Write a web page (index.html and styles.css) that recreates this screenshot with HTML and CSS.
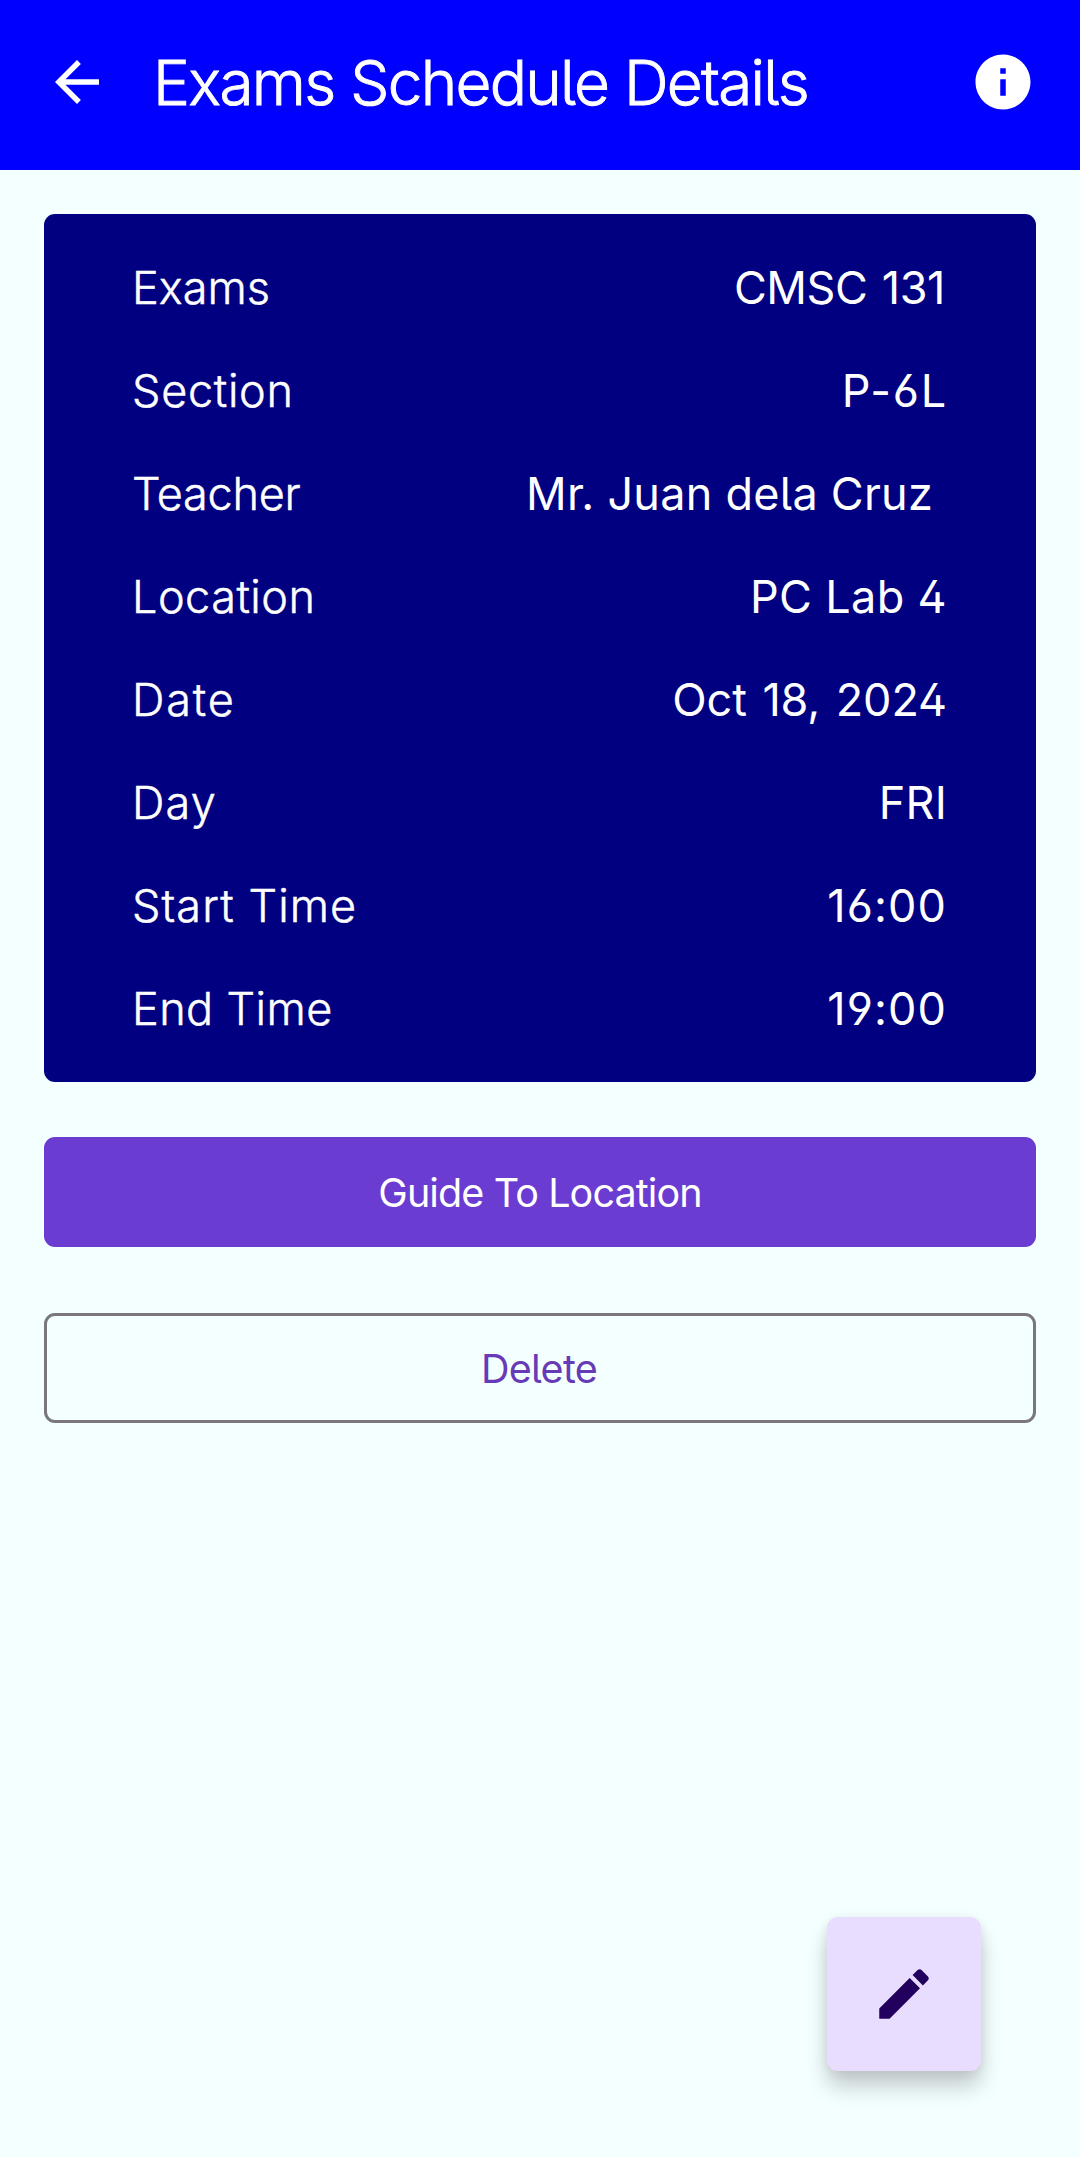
FILE: index.html
```html
<!DOCTYPE html>
<html lang="en">
<head>
<meta charset="utf-8">
<title>Exams Schedule Details</title>
<link rel="stylesheet" href="styles.css">
</head>
<body>
<header class="app-bar">
  <svg class="icon" viewBox="0 0 24 24" role="img" aria-label="Back"><path d="M20 11H7.83l5.59-5.59L12 4l-8 8 8 8 1.41-1.41L7.83 13H20v-2z"/></svg>
  <h1 class="title">Exams Schedule Details</h1>
  <svg class="icon" viewBox="0 0 24 24" role="img" aria-label="Information"><path d="M12 2C6.48 2 2 6.48 2 12s4.48 10 10 10 10-4.48 10-10S17.52 2 12 2zm1 15h-2v-6h2v6zm0-8h-2V7h2v2z"/></svg>
</header>
<main class="content">
  <dl class="card">
    <div class="row exam"><dt>Exams</dt><dd>CMSC 131</dd></div>
    <div class="row section"><dt>Section</dt><dd>P-6L</dd></div>
    <div class="row teacher"><dt>Teacher</dt><dd>Mr. Juan dela Cruz </dd></div>
    <div class="row location"><dt>Location</dt><dd>PC Lab 4</dd></div>
    <div class="row date"><dt>Date</dt><dd>Oct 18, 2024</dd></div>
    <div class="row day"><dt>Day</dt><dd>FRI</dd></div>
    <div class="row start"><dt>Start Time</dt><dd>16:00</dd></div>
    <div class="row end"><dt>End Time</dt><dd>19:00</dd></div>
  </dl>
  <button class="button filled" type="button">Guide To Location</button>
  <button class="button outlined" type="button">Delete</button>
</main>
<button class="fab" type="button" aria-label="Edit">
  <svg class="icon" viewBox="0 0 24 24"><path d="M3 17.25V21h3.75L17.81 9.94l-3.75-3.75L3 17.25zM20.71 7.04c.39-.39.39-1.02 0-1.41l-2.34-2.34c-.39-.39-1.02-.39-1.41 0l-1.83 1.83 3.75 3.75 1.83-1.83z"/></svg>
</button>
</body>
</html>
```
FILE: styles.css
```css
* {
  box-sizing: border-box;
}

body {
  margin: 0;
  min-height: 2157px;
  background: #f4ffff;
  color: #fff;
  font-family: Inter, "Noto Sans", sans-serif;
  font-feature-settings: "cv02", "cv03", "cv04", "cv05";
}

.icon {
  display: block;
  flex: none;
  width: 66px;
  height: 66px;
  fill: currentColor;
}

.app-bar {
  display: flex;
  align-items: center;
  height: 170px;
  padding: 0 44px 6px;
  background: #00f;
}

.title {
  flex: 1;
  margin: 0 0 0 43px;
  padding-top: 2px;
  font-size: 62px;
  font-weight: 300;
  line-height: 76px;
  letter-spacing: -1.7px;
  white-space: nowrap;
  -webkit-text-stroke: .9px currentColor;
}

.content {
  display: flex;
  flex-direction: column;
  padding: 44px;
}

.card {
  height: 868px;
  margin: 0 0 55px;
  padding: 22px 88px;
  border-radius: 11px;
  background: #000080;
}

.row {
  display: flex;
  justify-content: space-between;
  align-items: center;
  height: 103px;
  font-size: 45px;
  line-height: 60px;
  white-space: pre;
}

.row dt {
  font-weight: 300;
  -webkit-text-stroke: .5px currentColor;
}

.row dd {
  margin: 0;
  padding-right: 1px;
}

.exam dt { letter-spacing: 0; }
.exam dd { padding-right: 3px; letter-spacing: -.4px; word-spacing: 2px; }
.section dt { letter-spacing: .7px; }
.section dd { padding-right: 0; letter-spacing: 1.8px; }
.teacher dt { letter-spacing: -.25px; }
.teacher dd { padding-right: 2px; letter-spacing: .25px; }
.location dt { letter-spacing: .5px; }
.location dd { letter-spacing: .35px; }
.date dt { letter-spacing: 1.85px; }
.date dd { letter-spacing: -.1px; word-spacing: 3px; }
.day dt { letter-spacing: 1.2px; }
.day dd { padding-right: 1px; letter-spacing: .2px; }
.start dt { letter-spacing: 1.1px; }
.end dt { letter-spacing: .4px; }
.start dd,
.end dd { padding-right: 1px; letter-spacing: 1.1px; }

.button {
  height: 110px;
  padding: 2px 0 0;
  border: 0;
  border-radius: 11px;
  font: inherit;
  font-feature-settings: inherit;
  font-size: 39.5px;
  line-height: 55px;
}

.filled {
  margin-bottom: 66px;
  background: #6b3cd1;
  color: #fff;
  letter-spacing: -.9px;
}

.outlined {
  padding-right: 2px;
  border: 3px solid #79767e;
  background: transparent;
  color: #673ab7;
  letter-spacing: -.7px;
}

.fab {
  position: fixed;
  right: 99px;
  bottom: 86px;
  display: grid;
  place-items: center;
  width: 154px;
  height: 154px;
  padding: 0;
  border: 0;
  border-radius: 11px;
  background: #e8ddff;
  color: #22005d;
  box-shadow: 0 16px 22px rgba(0, 0, 0, .2), 0 2px 14px rgba(0, 0, 0, .08);
}
```
